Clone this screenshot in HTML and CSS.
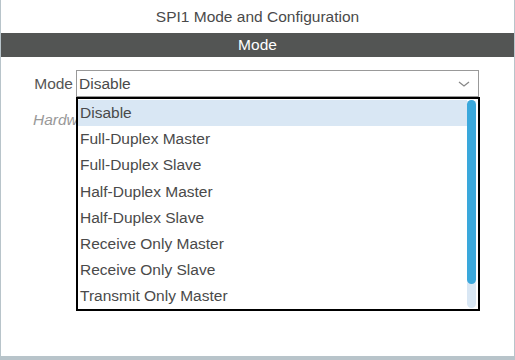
FILE: index.html
```html
<!DOCTYPE html>
<html lang="en">
<head>
    <meta charset="UTF-8">
    <title>SPI1 Mode and Configuration</title>
    <link rel="stylesheet" href="styles.css">
</head>
<body>
    <div class="panel">
        <div class="title">SPI1 Mode and Configuration</div>
        <div class="bar">Mode</div>
        <div class="form">
            <div class="row">
                <span class="label">Mode</span>
                <div class="select">
                    <span>Disable</span>
                    <svg class="caret" width="12" height="8" viewBox="0 0 12 8">
                        <path d="M1 2 L6 6 L11 2" fill="none" stroke="#888" stroke-width="1.3"/>
                    </svg>
                </div>
            </div>
            <div class="hint">Hardw</div>
            <div class="dropdown">
                <ul class="options">
                    <li class="selected">Disable</li>
                    <li>Full-Duplex Master</li>
                    <li>Full-Duplex Slave</li>
                    <li>Half-Duplex Master</li>
                    <li>Half-Duplex Slave</li>
                    <li>Receive Only Master</li>
                    <li>Receive Only Slave</li>
                    <li>Transmit Only Master</li>
                </ul>
                <div class="track"><div class="thumb"></div></div>
            </div>
        </div>
    </div>
</body>
</html>
```

FILE: styles.css
```css
body {
    margin: 0;
    font-family: "Liberation Sans", Arial, sans-serif;
    font-size: 15.5px;
    color: #4a4a4a;
    background-color: #fff;
}
.panel {
    width: 513px;
    height: 356px;
    border-left: 1px solid #b8c4ca;
    border-right: 1px solid #b8c4ca;
    border-bottom: 4px solid #b8c4ca;
}
.title {
    height: 33px;
    line-height: 33px;
    text-align: center;
    color: #4a4a4a;
}
.bar {
    height: 24px;
    line-height: 24px;
    background-color: #535554;
    color: #fff;
    text-align: center;
}
.form {
    position: relative;
    padding-top: 13px;
}
.row {
    display: flex;
    align-items: center;
}
.label {
    width: 72px;
    padding-right: 3px;
    text-align: right;
    color: #555;
}
.select {
    width: 399px;
    height: 25px;
    border: 1px solid #999;
    display: flex;
    align-items: center;
    justify-content: space-between;
    padding-left: 2px;
    color: #4a4a4a;
}
.caret {
    margin-right: 8px;
}
.hint {
    margin-top: 14px;
    padding-left: 32px;
    font-style: italic;
    color: #999;
}
.dropdown {
    position: absolute;
    left: 75px;
    top: 40px;
    width: 400px;
    height: 210px;
    border: 2px solid #000;
    background-color: #fff;
    display: flex;
}
.options {
    list-style-type: none;
    margin: 0;
    padding: 1px 0 0 0;
    flex: 1;
}
.options li {
    height: 26.2px;
    line-height: 26px;
    padding-left: 2px;
    color: #4a4a4a;
}
.options li.selected {
    background-color: #d9e7f4;
}
.track {
    width: 9px;
    margin: 1px 2px 0 0;
    height: 208px;
    border-radius: 5px;
    background-color: #d9e7f4;
}
.thumb {
    height: 184px;
    border-radius: 5px;
    background-color: #3aa8dc;
}
```
